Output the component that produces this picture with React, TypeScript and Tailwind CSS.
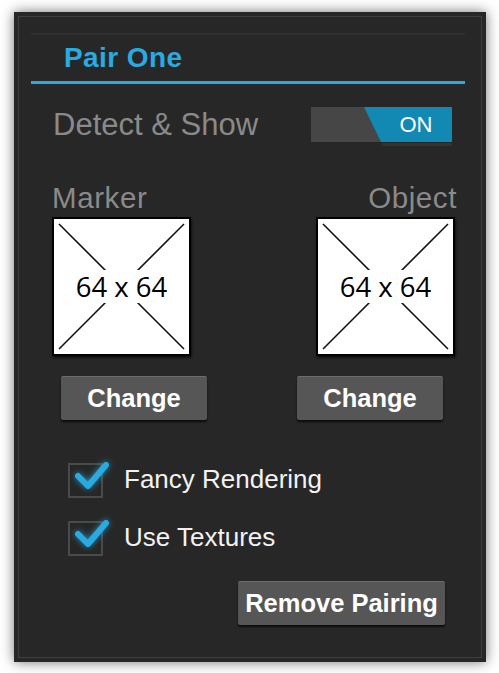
import React from "react";

const sans = { fontFamily: '"Liberation Sans", Arial, sans-serif' };

function Placeholder() {
  return (
    <div className="relative h-[139px] w-[139px] border-2 border-black bg-white shadow-[1px_2px_2px_rgba(0,0,0,0.6)]">
      <svg className="absolute inset-0" width="135" height="135" viewBox="0 0 135 135">
        <line x1="5" y1="5" x2="130" y2="130" stroke="#111" strokeWidth="1.6" />
        <line x1="130" y1="5" x2="5" y2="130" stroke="#111" strokeWidth="1.6" />
      </svg>
      <div className="absolute inset-0 flex items-center justify-center">
        <span
          className="bg-white px-[1px] py-[3px] text-[27.5px] leading-[27px] text-black"
          style={{ fontFamily: '"Open Sans", "Noto Sans", sans-serif' }}
        >
          64 x 64
        </span>
      </div>
    </div>
  );
}

function GrayButton({ label, className }: { label: string; className: string }) {
  return (
    <button
      className={`flex h-[44px] items-center justify-center rounded-[2px] border-t border-[#6c6c6c] bg-[#565656] text-[25.5px] font-bold text-white shadow-[0_2px_2px_rgba(0,0,0,0.7)] ${className}`}
      style={sans}
    >
      {label}
    </button>
  );
}

function CheckRow({ label }: { label: string }) {
  return (
    <div className="flex h-[35px] items-center">
      <div className="relative h-[35px] w-[35px] border-2 border-[#4a4a4a] bg-[#262626]">
        <svg
          className="absolute left-[4px] top-[-5px]"
          width="36"
          height="32"
          viewBox="0 0 36 32"
          style={{ filter: "drop-shadow(0 0 3px rgba(41,171,226,0.8))" }}
        >
          <polyline
            points="4,16 14,26 32,5"
            fill="none"
            stroke="#29abe2"
            strokeWidth="6"
            strokeLinecap="round"
            strokeLinejoin="round"
          />
        </svg>
      </div>
      <span className="ml-[21px] mb-[4px] text-[26px] leading-none text-[#f2f2f2]" style={sans}>
        {label}
      </span>
    </div>
  );
}

export default function App() {
  return (
    <div className="h-[673px] w-[499px] bg-white pl-[14px] pt-[12px]" style={sans}>
      <div className="h-[650px] w-[472px] bg-[#272727] p-[4px] shadow-[0_0_12px_rgba(0,0,0,0.55)]">
        <div className="flex h-full flex-col border border-[#3e3e3e]">
          <div className="ml-[12px] mr-[16px] mt-[16px] h-[2px] bg-[#2f2f2f]" />
          <div className="ml-[45px] mt-[9px] text-[28px] font-bold leading-[28px] tracking-[0.4px] text-[#29abe2]">
            Pair One
          </div>
          <div className="ml-[12px] mr-[16px] mt-[9px] h-[3px] bg-[#29abe2]" />

          <div className="ml-[34px] mr-[29px] mt-[23px] flex h-[35px] items-center justify-between">
            <span className="text-[31px] leading-none text-[#8a8a8a]">Detect &amp; Show</span>
            <div className="relative h-[35px] w-[141px]">
              <div className="absolute inset-0 bg-[#1189b3]" />
              <div
                className="absolute inset-0 bg-[#464646]"
                style={{ clipPath: "polygon(0 0, 53px 0, 70px 100%, 0 100%)" }}
              />
              <span className="absolute bottom-0 right-0 top-0 flex w-[72px] items-center justify-center text-[22px] text-white">
                ON
              </span>
              <div className="absolute bottom-[-4px] right-0 h-[3px] w-[70px] bg-[#333]" />
            </div>
          </div>

          <div className="ml-[33px] mr-[24px] mt-[41px] flex justify-between">
            <div className="flex flex-col items-start">
              <span className="h-[29px] text-[29.5px] leading-[29px] tracking-[0.6px] text-[#8a8a8a]">Marker</span>
              <div className="mt-[5px]">
                <Placeholder />
              </div>
              <GrayButton label="Change" className="ml-[9px] mt-[20px] w-[146px]" />
            </div>
            <div className="flex flex-col items-end">
              <span className="h-[29px] text-[29.5px] leading-[29px] tracking-[0.6px] text-[#8a8a8a]">Object</span>
              <div className="mr-[2px] mt-[5px]">
                <Placeholder />
              </div>
              <GrayButton label="Change" className="mr-[14px] mt-[20px] w-[146px]" />
            </div>
          </div>

          <div className="ml-[49px] mt-[43px] flex flex-col gap-[23px]">
            <CheckRow label="Fancy Rendering" />
            <CheckRow label="Use Textures" />
          </div>

          <div className="mr-[36px] mt-[25px] flex justify-end">
            <GrayButton label="Remove Pairing" className="w-[207px]" />
          </div>
        </div>
      </div>
    </div>
  );
}
